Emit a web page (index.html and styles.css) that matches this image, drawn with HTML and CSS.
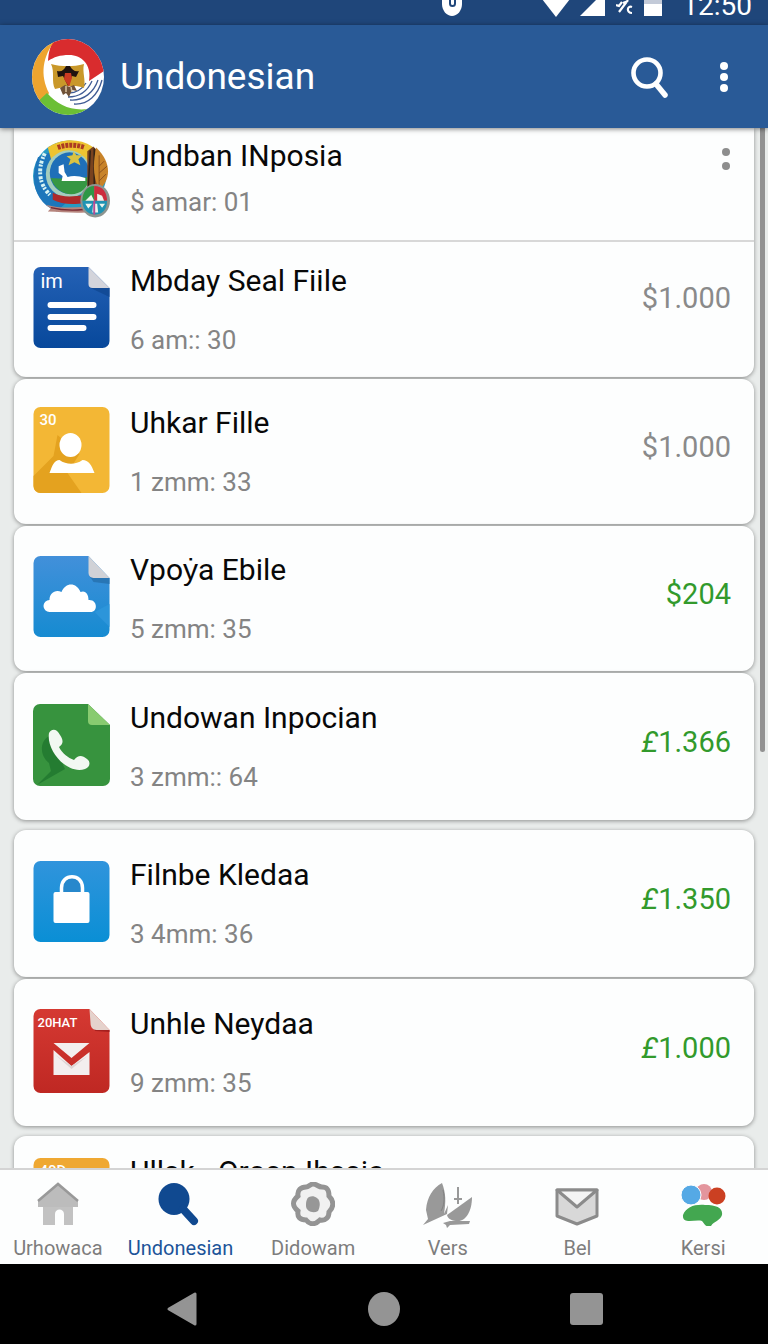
FILE: index.html
```html
<!DOCTYPE html>
<html lang="id">
<head>
<meta charset="utf-8">
<meta name="viewport" content="width=device-width, initial-scale=1">
<title>Undonesian</title>
<link rel="stylesheet" href="styles.css">
</head>

<body>
<div class="statusbar">
  <svg class="status-pin" width="20" height="20" viewBox="0 0 20 20"><path d="M0-4H20V4C20 11 15 16 10 16S0 11 0 4z" fill="#fff"/><rect x="8" y="-3" width="5" height="9" rx="2.5" fill="none" stroke="#1f467a" stroke-width="2"/></svg>
  <svg width="28" height="20" viewBox="0 0 28 20"><path d="M0-1H28L14 17z" fill="#fff"/></svg>
  <svg width="26" height="20" viewBox="0 0 26 20"><path d="M0 16L18-2H25V16z" fill="#fff"/></svg>
  <svg width="18" height="20" viewBox="0 0 18 20"><path d="M0 5l3 1 3-4M3 12L12 0M7 3l5-2M16 7c-5-2-6 6 0 6" fill="none" stroke="#fff" stroke-width="2.2"/></svg>
  <svg class="status-battery" width="18" height="20" viewBox="0 0 18 20"><path d="M0 0H18V4H0z" fill="#c3cad8"/><path d="M0 4H18V16H0z" fill="#fff"/></svg>
  <span class="status-time">12:50</span>
</div>

<header class="appbar">
  <svg class="logo" width="72" height="76" viewBox="0 0 72 76">
    <defs><clipPath id="disc"><ellipse cx="36" cy="38" rx="36" ry="38"/></clipPath></defs>
    <g clip-path="url(#disc)">
      <path d="M0 0H72V76H0z" fill="#fff"/>
      <path d="M16 24C16 12 20 4 22 0H72V32L57 42C60 26 50 16 37 16 28 16 22 18 16 22z" fill="#d92c2e"/>
      <path d="M0 0H24C10 18 8 36 17 54L8 70H0z" fill="#eda42f"/>
      <path d="M15 54C26 66 38 72 56 70L48 76H0V68z" fill="#6bbf35"/>
      <path d="M70 41C66 56 56 66 42 65M66 41C62 53 52 62 38 61M60 42C56 51 48 58 36 58M54 44C50 50 44 54 37 54" fill="none" stroke="#3f5b94" stroke-width="1.3"/>
    </g>
    <path d="M19 25c11 3 22 3 33 0-2 8 2 16 0 24-10-4-20-1-29 1-4-7 0-17-4-25z" fill="#c9982a"/>
    <path d="M25 32c5 1 7-1 9-5h4c2 4 5 6 9 5l-3 6-4-1-4 10-5-10-5 1z" fill="#20130f"/>
    <path d="M33 34h6l1 5-3 9-5-8z" fill="#cb3b22"/>
    <path d="M28 49l5-3 4 2 5-2 3 6-5-1-3 7-3-4-3 2z" fill="#705238"/>
    <path d="M34 47v6M39 48l1 5" stroke="#d9c4a0" stroke-width="1.5"/>
  </svg>
  <h1 class="appbar-title">Undonesian</h1>
  <button class="icon-button" type="button" aria-label="Search">
    <svg width="42" height="44" viewBox="0 0 42 44" fill="none" stroke="#fff"><circle cx="18" cy="18" r="13.5" stroke-width="4.6"/><path d="M27 29L36 40" stroke-width="5.5" stroke-linecap="round"/></svg>
  </button>
  <button class="icon-button" type="button" aria-label="More options">
    <svg width="10" height="32" viewBox="0 0 10 32" fill="#fff"><circle cx="5" cy="5" r="4"/><circle cx="5" cy="16" r="4"/><circle cx="5" cy="27" r="4"/></svg>
  </button>
</header>

<main class="list">
  <div class="group">
    <section class="card card-first">
      <article class="row row-compact">
        <svg class="row-icon" width="76" height="80" viewBox="0 0 78 80">
          <ellipse cx="37" cy="37" rx="37" ry="36" fill="#279bc4"/>
          <path d="M5 18C-4 42 2 64 24 73l13-12C17 51 14 28 24 10z" fill="#1d76bb"/>
          <path d="M15 8C30-2 47-1 60 7L55 29 20 26z" fill="#edc331"/>
          <ellipse cx="36" cy="35" rx="23" ry="24" fill="#a4cdbd"/>
          <ellipse cx="37" cy="34" rx="20" ry="21" fill="#1f6fb8"/>
          <path d="M18 39c10 1 30 0 39-1-1 21-31 25-39 1z" fill="#369743"/>
          <path d="M26 27l5-2 1 8 3 5c6-2 12-1 18 1v3H29l1-5-4-3z" fill="#fff"/>
          <path d="M41 12l3 4 6 0-4 4 2 6-6-3-6 3 2-6-4-3 6-1z" fill="#dbc342"/>
          <path d="M12 14C5 28 5 44 17 56" fill="none" stroke="#d6f3f4" stroke-width="4" stroke-dasharray="3 1 2 2"/>
          <path d="M25 8c9-3 18-3 27 0" fill="none" stroke="#ac3b22" stroke-width="5" stroke-dasharray="3 1"/>
          <path d="M55 12l6-5 4 4v44H55z" fill="#79421f"/>
          <path d="M58 11l-2 38M62 9v39" stroke="#302217" stroke-width="1.5"/>
          <path d="M64 8c16 15 15 33 3 43-7-14-6-29-3-43z" fill="#c88329"/>
          <path d="M67 49V16M67 27l5-5M67 34l8-7M67 42l7-7" stroke="#8b4f1c" fill="none"/>
          <path d="M20 54c10 5 21 4 32 2v8c-12 3-24 1-32-3z" fill="#ae2a2a"/>
          <path d="M13 66c14 4 27 3 40 2v6c-14 1-26-1-38-1l3-3z" fill="#b6857d"/>
          <path d="M18 69c12 3 22 3 33 2" fill="none" stroke="#792832" stroke-width="1.5"/>
          <ellipse cx="63" cy="62" rx="15" ry="17" fill="#8d9590"/>
          <path d="M62 62V47c-8 0-12 7-12 15z" fill="#2e9746"/><path d="M62 62V47c9 0 13 7 13 15z" fill="#cc2d3d"/>
          <path d="M50 62h25c0 9-5 14-12 14S50 71 50 62z" fill="#1f93b3"/>
          <path d="M53 62l6-6 3 6zM65 62v-7l5 2 2 5zM53 65h7l-4 5zM61 65h4l1 9h-6zM67 65h6l-3 4z" fill="#edf5ed"/>
          <path d="M62 62v14" stroke="#b54b95" stroke-width="2"/>
        </svg>
        <div class="row-text"><h2 class="row-title">Undban INposia</h2><p class="row-meta">$ amar: 01</p></div>
        <button class="icon-button row-more" type="button" aria-label="Row options">
          <svg width="10" height="24" viewBox="0 0 10 24" fill="#8d8d8d"><circle cx="5" cy="5" r="4"/><circle cx="5" cy="19" r="4"/></svg>
        </button>
      </article>
      <article class="row row-second">
        <svg class="row-icon" width="76" height="81" viewBox="0 0 76 81">
          <defs><linearGradient id="navy" x2="0" y2="1"><stop stop-color="#2461b5"/><stop offset="1" stop-color="#07489b"/></linearGradient></defs>
          <path d="M7 0H55L76 21V74a7 7 0 0 1-7 7H7a7 7 0 0 1-7-7V7a7 7 0 0 1 7-7z" fill="url(#navy)"/>
          <path d="M55 20L76 21V30z" fill="#124b97"/>
          <path d="M55 0L76 21H59a4 4 0 0 1-4-4z" fill="#d3d4db"/>
          <text class="icon-label icon-label-doc" x="7" y="21">im</text>
          <path d="M17 38H60M17 50H60M17 61H50" stroke="#fff" stroke-width="6" stroke-linecap="round"/>
        </svg>
        <div class="row-text"><h2 class="row-title">Mbday Seal Fiile</h2><p class="row-meta">6 am:: 30</p></div>
        <span class="amount">$1.000</span>
      </article>
    </section>

    <article class="card row">
      <svg class="row-icon" width="76" height="86" viewBox="0 0 76 86">
        <rect width="76" height="86" rx="7" fill="#f3b735"/>
        <path d="M0 69L20 49 24 28 46 47 34 66 48 86H7a7 7 0 0 1-7-7z" fill="#e4a21f"/>
        <text class="icon-label icon-label-small" x="6" y="18">30</text>
        <ellipse cx="37" cy="38" rx="11" ry="12" fill="#fff"/>
        <path d="M16 66c3-8 5-13 10-13 7 5 16 5 23 0 6 0 9 5 12 13z" fill="#fff"/>
      </svg>
      <div class="row-text"><h2 class="row-title">Uhkar Fille</h2><p class="row-meta">1 zmm: 33</p></div>
      <span class="amount">$1.000</span>
    </article>

    <article class="card row">
      <svg class="row-icon" width="76" height="81" viewBox="0 0 76 81">
        <defs><linearGradient id="sky" x2="0" y2="1"><stop stop-color="#4290da"/><stop offset="1" stop-color="#168bd1"/></linearGradient></defs>
        <path d="M7 0H55L76 22V74a7 7 0 0 1-7 7H7a7 7 0 0 1-7-7V7a7 7 0 0 1 7-7z" fill="url(#sky)"/>
        <path d="M61 56L76 71V48z" fill="#2c95da"/>
        <path d="M56 20l4 6 16 2v-6z" fill="#2876b5"/>
        <path d="M55 0L76 22H60a5 5 0 0 1-5-5z" fill="#d0d2d7"/>
        <path d="M16 56a6 6 0 0 1 0-12c0-7 6-11 12-8 4-10 15-10 19 0 5-2 8 2 8 8 9-1 10 12 2 12z" fill="#fff"/>
      </svg>
      <div class="row-text"><h2 class="row-title">Vpoẏa Ebile</h2><p class="row-meta">5 zmm: 35</p></div>
      <span class="amount amount-plus">$204</span>
    </article>

    <article class="card row row-tall">
      <svg class="row-icon" width="76" height="82" viewBox="0 0 77 82">
        <path d="M7 0H55L77 21V75a7 7 0 0 1-7 7H7a7 7 0 0 1-7-7V7a7 7 0 0 1 7-7z" fill="#37933e"/>
        <path d="M16 32C6 38 7 52 16 59L18 67 4 81 32 65z" fill="#247c31"/>
        <path d="M55 0L77 21H59a4 4 0 0 1-4-4z" fill="#88cb70"/>
        <path d="M16 29c3-5 8-4 11 2 4 6 3 9-1 12 3 6 9 11 15 13 4-5 8-5 13-1 4 3 3 8-2 10C34 71 13 46 16 29z" fill="#f2f8f2"/>
      </svg>
      <div class="row-text"><h2 class="row-title">Undowan Inpocian</h2><p class="row-meta">3 zmm:: 64</p></div>
      <span class="amount amount-plus"><i>£</i>1.366</span>
    </article>
  </div>

  <div class="group">
    <article class="card row row-tall">
      <svg class="row-icon" width="76" height="81" viewBox="0 0 76 81">
        <defs><linearGradient id="azure" x2="0" y2="1"><stop stop-color="#3094dc"/><stop offset="1" stop-color="#0a8fd5"/></linearGradient></defs>
        <rect width="76" height="81" rx="7" fill="url(#azure)"/>
        <path d="M28 33V27C28 12 49 12 49 27V33" fill="#2788cc" stroke="#fff" stroke-width="3.5"/>
        <rect x="20" y="31" width="36" height="31" rx="2" fill="#fff"/>
      </svg>
      <div class="row-text"><h2 class="row-title">Filnbe Kledaa</h2><p class="row-meta">3 4mm: 36</p></div>
      <span class="amount amount-plus"><i>£</i>1.350</span>
    </article>

    <article class="card row row-tall">
      <svg class="row-icon" width="76" height="84" viewBox="0 0 76 84">
        <defs><linearGradient id="red" x2="0" y2="1"><stop stop-color="#d53932"/><stop offset="1" stop-color="#bf2823"/></linearGradient></defs>
        <path d="M7 0H56L76 21V77a7 7 0 0 1-7 7H7a7 7 0 0 1-7-7V7a7 7 0 0 1 7-7z" fill="url(#red)"/>
        <path d="M57 17l5 5 14 1v-2z" fill="#a61f1e"/>
        <path d="M56 0L76 21H63c-4 0-6-3-6-7z" fill="#e5d2cc"/>
        <text class="icon-label icon-label-mail" x="4" y="18">20HAT</text>
        <path d="M20 34H56L38 49zM20 41L38 57 56 43V66H20z" fill="#f3eeee"/>
        <path d="M22 46L38 60 54 47 38 57z" fill="#ddd4d4"/>
      </svg>
      <div class="row-text"><h2 class="row-title">Unhle Neydaa</h2><p class="row-meta">9 zmm: 35</p></div>
      <span class="amount amount-plus"><i>£</i>1.000</span>
    </article>
  </div>

  <div class="group">
    <article class="card row row-last">
      <svg class="row-icon" width="76" height="81" viewBox="0 0 76 81">
        <rect width="76" height="81" rx="7" fill="#efa832"/>
        <text class="icon-label icon-label-small" x="6" y="18">40D</text>
      </svg>
      <div class="row-text"><h2 class="row-title">Ullsk - Orosn Ihssia</h2></div>
    </article>
  </div>
  <div class="scrollbar"></div>
</main>

<nav class="tabs">
  <a class="tab" href="#home">
    <svg width="44" height="44" viewBox="0 0 44 44"><path d="M7 19H37V43H28V32c0-6-9-6-9 0V43H7z" fill="#c2c2c2"/><path d="M22 2L2 19V25H42V19z" fill="#bcbcbc"/><path d="M2 19L22 2 42 19" fill="none" stroke="#999" stroke-width="2.5"/></svg>
    Urhowaca
  </a>
  <a class="tab tab-active" href="#undonesian">
    <svg width="48" height="44" viewBox="0 0 48 44"><ellipse cx="17" cy="17" rx="15.5" ry="16" fill="#104990"/><path d="M26 27L37 39" stroke="#104990" stroke-width="8" stroke-linecap="round"/></svg>
    Undonesian
  </a>
  <a class="tab" href="#didowam">
    <svg width="44" height="44" viewBox="0 0 44 44"><path d="M22 2c4 0 5 3 9 3 6 0 7 4 7 9 5 5 5 11 0 16 0 5-3 9-9 8-5 5-10 5-14 0-6 0-9-3-8-9-6-5-6-10 0-15-1-6 3-9 8-9 3 0 4-3 7-3z" fill="#f1f1f1" stroke="#949494" stroke-width="5"/><path d="M18 15c3-1 5-1 8 1 4 3 3 9 1 13-5 3-12 0-12-5 0-3 0-7 3-9z" fill="#979797"/></svg>
    Didowam
  </a>
  <a class="tab" href="#vers">
    <svg width="52" height="46" viewBox="0 0 52 46" fill="#999"><path d="M20 1c4 10 4 19 2 31l4-9-1 9L1 43l5-6-2-9C5 15 11 6 20 1z"/><path d="M25 33L50 15C50 29 44 39 36 39c-6 0-10-2-11-6z"/><path d="M36 5v17M32 17h8" stroke="#999" stroke-width="2"/><path d="M21 41l7-2h20l-1 3-19 1-3 3-1-3z"/><path d="M21 8c2 9 1 16-2 21" fill="none" stroke="#818181"/></svg>
    Vers
  </a>
  <a class="tab" href="#bel">
    <svg width="46" height="44" viewBox="0 0 46 44" stroke="#8b8b8b" stroke-width="3" stroke-linejoin="round"><path d="M3 8H43V34L23 42 3 34z" fill="#d8d8d8"/><path d="M3 8H43L23 25z" fill="#f4f4f4"/></svg>
    Bel
  </a>
  <a class="tab" href="#kersi">
    <svg width="46" height="44" viewBox="0 0 46 44"><ellipse cx="24" cy="10" rx="8" ry="8" fill="#e3959d"/><ellipse cx="11" cy="13" rx="10" ry="10" fill="#55a9e5" stroke="#fff"/><circle cx="37" cy="14" r="8.5" fill="#cb4022"/><path d="M3 33c3-8 12-11 22-10 12 0 18 3 17 10-2 6-8 6-11 11-4 2-6-1-9-5-7-2-20 4-19-6z" fill="#43a750"/></svg>
    Kersi
  </a>
</nav>

<div class="sysnav">
  <button class="sys-button" type="button" aria-label="Back"><svg width="34" height="36" viewBox="0 0 34 36"><path d="M4 18L30 3V33z" fill="#949494" stroke="#949494" stroke-width="3" stroke-linejoin="round"/></svg></button>
  <button class="sys-button" type="button" aria-label="Home"><svg width="34" height="36" viewBox="0 0 34 36"><ellipse cx="17" cy="18" rx="16" ry="17" fill="#949494"/></svg></button>
  <button class="sys-button" type="button" aria-label="Overview"><svg width="34" height="36" viewBox="0 0 34 36"><rect x="1" y="2" width="33" height="32" rx="3" fill="#949494"/></svg></button>
</div>
</body>
</html>
```
FILE: styles.css
```css
* { box-sizing: border-box; }
body { margin: 0; height: 100vh; display: flex; flex-direction: column; overflow: hidden;
  font-family: Roboto, "Liberation Sans", sans-serif; background: #e9eceb; }
h1, h2, p { margin: 0; font-weight: normal; }
svg { display: block; flex: none; }
button { padding: 0; border: 0; background: none; cursor: pointer; }

.statusbar { flex: none; height: 25px; padding: 0 16px 5px; display: flex; justify-content: flex-end;
  align-items: flex-end; gap: 10px; overflow: hidden; background: #1f467a; color: #fff; }
.status-pin { margin-right: 70px; }
.status-battery { margin-right: 10px; }
.status-time { font-size: 28px; line-height: 28px; }

.appbar { flex: none; height: 103px; padding: 0 39px 0 32px; display: flex; align-items: center;
  gap: 16px; background: #295a97; color: #fff; position: relative; z-index: 1;
  box-shadow: 0 1px 5px rgba(0,0,0,0.5); }
.appbar-title { flex: 1; font-size: 37px; line-height: 48px; }
.icon-button { display: flex; align-items: center; justify-content: center; }
.appbar .icon-button + .icon-button { margin-left: 32px; }

.list { flex: 1; min-height: 0; overflow: hidden; position: relative; padding: 0 14px; }
.group { display: flex; flex-direction: column; gap: 2px; margin-bottom: 10px; }
.card { background: #fdfefe; border-radius: 12px; box-shadow: 0 1px 4px rgba(0,0,0,0.4); }
.card-first { border-radius: 0 0 12px 12px; }
.row { min-height: 145px; padding: 0 23px 4px 19px; display: flex; align-items: center; gap: 20px; }
.row-tall { min-height: 147px; }
.row-last { min-height: 125px; padding-bottom: 0; }
.row-compact { min-height: 112px; padding-bottom: 10px; }
.row-second { min-height: 137px; border-top: 2px solid #d8d8d8; }
.row-icon { width: 77px; }
.row-text { flex: 1; min-width: 0; min-height: 101px; padding-top: 6px; display: flex;
  flex-direction: column; gap: 23px; }
.row-compact .row-text { min-height: 82px; padding-top: 0; gap: 10px; }
.row-compact .icon-button { align-self: flex-start; padding-top: 19px; }
.row-title { font-size: 30px; line-height: 36px; color: #080808; }
.row-meta { font-size: 26px; line-height: 36px; color: #848484; }
.amount { padding-bottom: 6px; font-size: 29px; line-height: 36px; color: #8a8a8a; }
.row-second .amount { padding-bottom: 20px; }
.amount-plus { color: #329a2c; }
.scrollbar { position: absolute; top: 0; right: 3px; width: 5px; height: 60%;
  border-radius: 0 0 3px 3px; background: #929292; }

.icon-label { fill: #fff; font-family: Roboto, sans-serif; }
.icon-label-doc { font-size: 20px; }
.icon-label-small { font-size: 15px; font-weight: 500; }
.icon-label-mail { font-size: 13px; font-weight: 500; }

.tabs { flex: none; height: 96px; padding: 12px 0 0 2px; display: grid;
  grid-template-columns: 112fr 134fr 132fr 138fr 122fr 130fr; background: #fdfefe;
  border-top: 2px solid #d4d4d4; }
.tab { display: flex; flex-direction: column; align-items: center; justify-content: space-between;
  height: 80px; font-size: 20px; line-height: 28px; color: #7d7d7d; text-decoration: none; }
.tab-active { color: #1c5499; }

.sysnav { flex: none; height: 80px; padding-top: 9px; display: flex; justify-content: center;
  align-items: center; gap: 168px; background: #000; }
```
